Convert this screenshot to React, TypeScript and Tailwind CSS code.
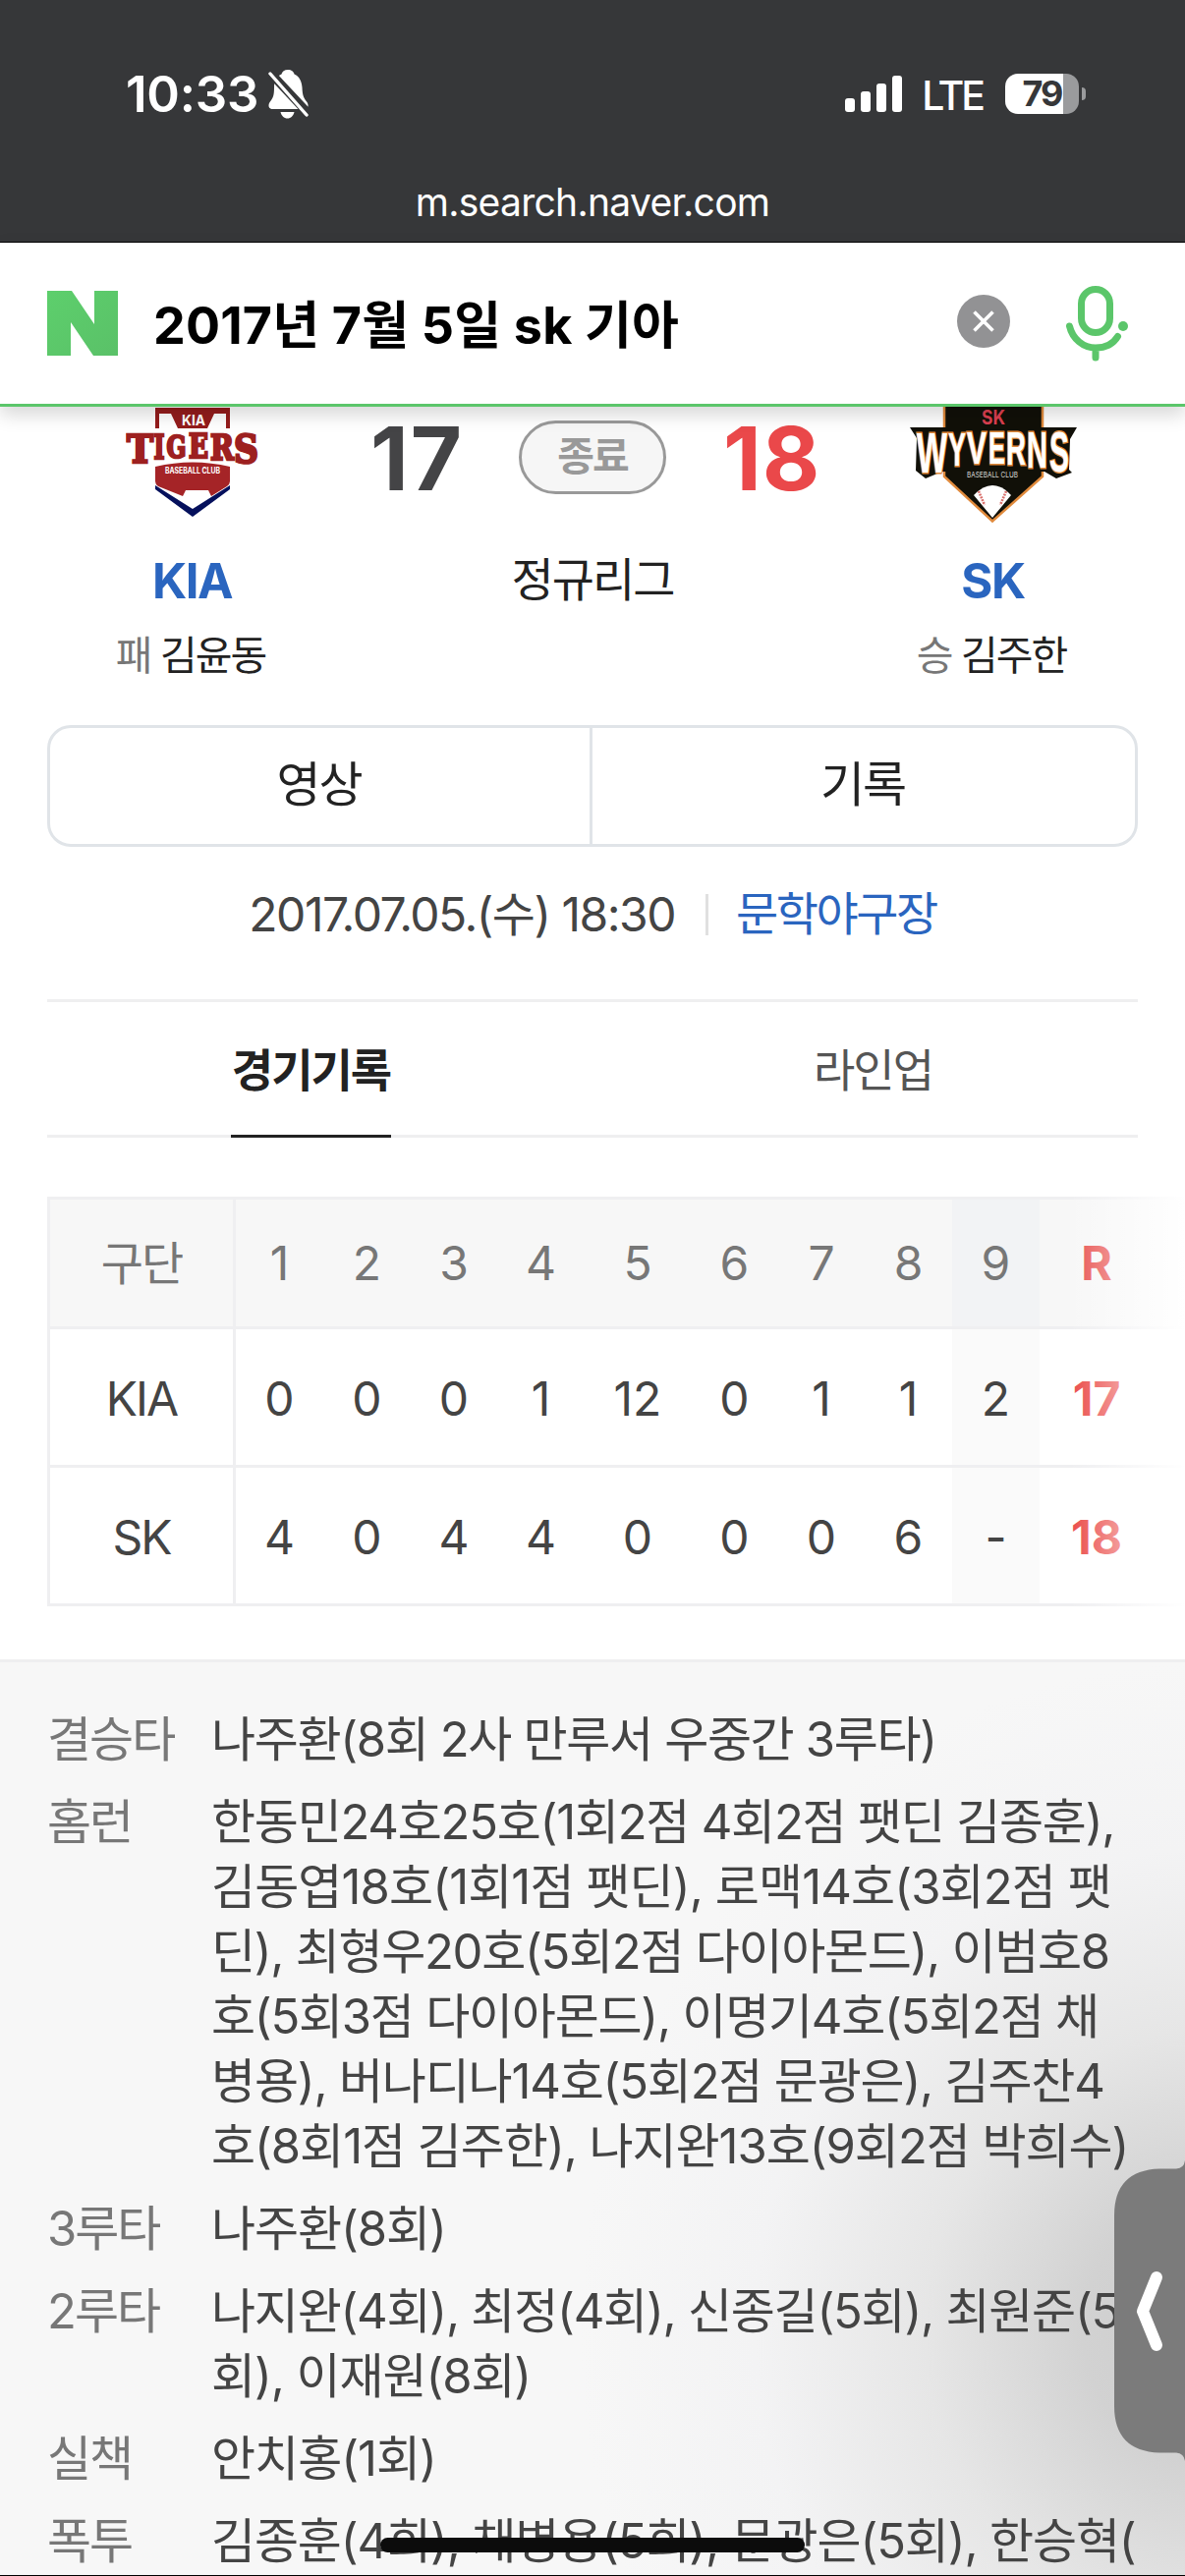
const innings = ["1", "2", "3", "4", "5", "6", "7", "8", "9"];
const teams = [
  { name: "KIA", runs: ["0", "0", "0", "1", "12", "0", "1", "1", "2"], total: "17" },
  { name: "SK", runs: ["4", "0", "4", "4", "0", "0", "0", "6", "-"], total: "18" },
];

type Line = { text: string; tracking: string };

const details: { label: string; lines: Line[] }[] = [
  { label: "결승타", lines: [{ text: "나주환(8회 2사 만루서 우중간 3루타)", tracking: "tracking-[-1.35px]" }] },
  {
    label: "홈런",
    lines: [
      { text: "한동민24호25호(1회2점 4회2점 팻딘 김종훈),", tracking: "tracking-[-1.25px]" },
      { text: "김동엽18호(1회1점 팻딘), 로맥14호(3회2점 팻", tracking: "tracking-[-0.9px]" },
      { text: "딘), 최형우20호(5회2점 다이아몬드), 이범호8", tracking: "tracking-[-1.3px]" },
      { text: "호(5회3점 다이아몬드), 이명기4호(5회2점 채", tracking: "tracking-[-1.25px]" },
      { text: "병용), 버나디나14호(5회2점 문광은), 김주찬4", tracking: "tracking-[-1.2px]" },
      { text: "호(8회1점 김주한), 나지완13호(9회2점 박희수)", tracking: "tracking-[-1.05px]" },
    ],
  },
  { label: "3루타", lines: [{ text: "나주환(8회)", tracking: "tracking-[-1.1px]" }] },
  {
    label: "2루타",
    lines: [
      { text: "나지완(4회), 최정(4회), 신종길(5회), 최원준(5", tracking: "tracking-[-1.25px]" },
      { text: "회), 이재원(8회)", tracking: "tracking-[-1.1px]" },
    ],
  },
  { label: "실책", lines: [{ text: "안치홍(1회)", tracking: "tracking-[-1px]" }] },
  { label: "폭투", lines: [{ text: "김종훈(4회), 채병용(5회), 문광은(5회), 한승혁(", tracking: "tracking-[-1.15px]" }] },
];

function StatusBar() {
  return (
    <header className="h-[247px] shrink-0 border-b border-black bg-[#363739] text-white">
      <div className="flex h-[191px] items-center pl-[128px] pr-[101px]">
        <span className="text-[51px] font-semibold leading-[60px] tracking-[-0.2px]">10:33</span>
        <svg className="ml-[10px] h-[50px] w-[42px]" viewBox="0 0 42 50">
          <path d="M20 0c3.500 0 6 2 6.500 4.500C32 7 34 12 34.500 18c.3 8 1.500 11 5 15 2 3 1 7-2 7h-34c-3 0-4-4-2-7C5 29 6 26 6 18c0-6 2-11 7.500-13.500C14 2 16.500 0 20 0z" fill="white" />
          <path d="M12.500 43h14c-1 4-3.500 6.500-7 6.500s-6-2.500-7-6.500z" fill="white" />
          <path d="M0 1l44 47" stroke="#363739" strokeWidth="9" />
          <path d="M2 4l37 42" stroke="white" strokeWidth="3.400" strokeLinecap="round" />
        </svg>
        <div className="ml-auto flex h-[37px] items-end gap-[6px]">
          <i className="h-[14px] w-[10px] rounded-[3px] bg-white" />
          <i className="h-[21px] w-[10px] rounded-[3px] bg-white" />
          <i className="h-[29px] w-[10px] rounded-[3px] bg-white" />
          <i className="h-[37px] w-[10px] rounded-[3px] bg-white" />
        </div>
        <span className="ml-[20px] mt-[2px] text-[41px] font-medium leading-[50px] tracking-[-3px]">LTE</span>
        <div className="ml-[23px] flex h-[41px] w-[75px] items-center justify-center overflow-hidden rounded-[13px] bg-[linear-gradient(to_right,white_79%,#9a9b9d_79%)]">
          <span className="text-[36px] font-bold leading-[41px] tracking-[-2px] text-[#363739]">79</span>
        </div>
        <i className="ml-[3px] h-[13px] w-[4px] rounded-r-full bg-[#9a9b9d]" />
      </div>
      <p className="text-center text-[39px] leading-[29px] tracking-[-0.7px]">m.search.naver.com</p>
    </header>
  );
}

function SearchBar() {
  return (
    <div className="z-10 flex h-[167px] shrink-0 items-center border-b-[3px] border-[#5bc66a] bg-white pl-12 pr-[58px] shadow-[0_8px_18px_rgba(0,0,0,0.16)]">
      <svg className="h-[66px] w-[72px]" viewBox="0 0 72 66">
        <defs>
          <linearGradient id="brand" x1="0" y1="0" x2="1" y2="1">
            <stop offset="0" stopColor="#5dcf6c" />
            <stop offset="1" stopColor="#5ac168" />
          </linearGradient>
        </defs>
        <path d="M0 0h25l23 34V0h24v66H47L24 32v34H0z" fill="url(#brand)" />
      </svg>
      <p className="ml-[36px] mt-[6px] text-[52px] font-bold leading-[60px] tracking-[0.2px] text-black">2017년 7월 5일 sk 기아</p>
      <svg className="mb-1 ml-auto size-[54px]" viewBox="0 0 54 54">
        <circle cx="27" cy="27" r="27" fill="#929294" />
        <path d="M17.500 17.500l19 19m0-19l-19 19" stroke="white" strokeWidth="3.600" />
      </svg>
      <svg className="ml-[57px] h-[77px] w-[63px]" viewBox="0 0 63 77" fill="none" stroke="#5bc66a" strokeWidth="7" strokeLinecap="round">
        <rect x="15.500" y="3.500" width="29" height="44" rx="14.500" />
        <path d="M3.500 41c3 13 14 22 26.500 22 10 0 18-4 22.500-11.500M30 63v10" />
        <circle cx="58" cy="41" r="5" fill="#5bc66a" stroke="none" />
      </svg>
    </div>
  );
}

function TigersLogo() {
  return (
    <svg className="h-[118px] w-[136px]" viewBox="0 0 136 118">
      <path d="M30 1h76v21h-4V7H90l-7 15H53L46 7H34v15h-4z" fill="#941c1c" />
      <text x="57" y="18.500" textLength="24" lengthAdjust="spacingAndGlyphs" fontSize="14" className="fill-white font-bold">KIA</text>
      <g fontFamily="DejaVu Serif" fontWeight="900" fill="#9d2020" stroke="#9d2020" strokeWidth="2.600">
        <text x="1" y="57" fontSize="40" textLength="27" lengthAdjust="spacingAndGlyphs">T</text>
        <text x="28.500" y="53" fontSize="34" textLength="11" lengthAdjust="spacingAndGlyphs">I</text>
        <text x="41.500" y="52" fontSize="32" textLength="20" lengthAdjust="spacingAndGlyphs">G</text>
        <text x="64" y="52" fontSize="33" textLength="20" lengthAdjust="spacingAndGlyphs">E</text>
        <text x="86" y="54" fontSize="36" textLength="24" lengthAdjust="spacingAndGlyphs">R</text>
        <text x="110" y="57" fontSize="40" textLength="25" lengthAdjust="spacingAndGlyphs">S</text>
      </g>
      <path d="M30 61Q68 52 106 61v15q0 3-3 5L87 91l-3-6H61l-3 6L33 81q-3-2-3-5z" fill="#a52427" />
      <text x="40" y="68" textLength="56" lengthAdjust="spacingAndGlyphs" fontSize="8.500" className="fill-white font-bold">BASEBALL CLUB</text>
      <path d="M30 80l38 24 38-24v4L68 112 30 84z" fill="#05105c" />
    </svg>
  );
}

const wyvernsLetters = [
  { ch: "W", x: 7, y: 67, size: 58, w: 31 },
  { ch: "Y", x: 39, y: 60, size: 49, w: 18 },
  { ch: "V", x: 58, y: 58, size: 46, w: 20 },
  { ch: "E", x: 80, y: 58, size: 46, w: 17 },
  { ch: "R", x: 98, y: 59, size: 48, w: 20 },
  { ch: "N", x: 119, y: 62, size: 52, w: 21 },
  { ch: "S", x: 142, y: 66, size: 57, w: 20 },
];

function WyvernsLogo() {
  return (
    <svg className="h-[118px] w-[170px]" viewBox="0 0 170 118">
      <path d="M35 -4h100v75L84 116.500 35 71z" fill="#111008" stroke="#e08a3c" strokeWidth="2.500" />
      <text x="73" y="18" textLength="24" lengthAdjust="spacingAndGlyphs" fontSize="20" className="fill-[#dc3f50] font-bold">SK</text>
      <path d="M0 21h170l-7 12-1 31 3 3-16 6-12-7H34l-6 2-12 5-10-8 1-33z" fill="#111008" />
      {wyvernsLetters.map((l) => (
        <text key={l.ch} x={l.x} y={l.y} fontSize={l.size} textLength={l.w} lengthAdjust="spacingAndGlyphs" fontFamily="Liberation Sans" fontWeight="700" fill="white" stroke="#e08a3c" strokeWidth="2.800" paintOrder="stroke">
          {l.ch}
        </text>
      ))}
      <text x="58" y="72" textLength="52" lengthAdjust="spacingAndGlyphs" fontSize="8" className="fill-[#d8d8d4]">BASEBALL CLUB</text>
      <path d="M65 90q19-20 38 0l-19 23z" fill="white" />
      <path d="M70 86l6 14M98 86l-6 14" stroke="#d9706c" strokeWidth="2.600" strokeDasharray="2 1" />
    </svg>
  );
}

function Pitcher({ result, name }: { result: string; name: string }) {
  return (
    <p className="mr-[3px] mt-[20px] text-[41px] leading-[50px] tracking-[-2px] text-[#222]">
      <span className="text-[#777]">{result}</span> {name}
    </p>
  );
}

function ScoreBoard() {
  return (
    <section className="grid h-[324px] shrink-0 grid-cols-[376px_1fr_376px] text-center">
      <div className="flex flex-col items-center pl-[15px]">
        <TigersLogo />
        <p className="mt-[30px] text-[49px] font-bold leading-[60px] tracking-[-1.500px] text-[#2a65bf]">KIA</p>
        <Pitcher result="패" name="김윤동" />
      </div>
      <div>
        <div className="grid h-[102px] grid-cols-[97px_1fr_97px] items-center">
          <span className="whitespace-nowrap pt-[3px] text-[90px] font-bold leading-[99px] tracking-[2px] text-[#444446]">17</span>
          <span className="h-[75px] w-[150px] justify-self-center rounded-full border-[3px] border-[#999] bg-[#f6f6f6] text-[41px] font-bold leading-[67px] tracking-[-2px] text-[#999]">종료</span>
          <span className="whitespace-nowrap pl-[3px] pt-[3px] text-[90px] font-bold leading-[99px] tracking-[1px] text-[#ea484a]">18</span>
        </div>
        <p className="mt-[44px] text-[47px] leading-[60px] tracking-[-2px] text-[#222]">정규리그</p>
      </div>
      <div className="flex flex-col items-center pr-[15px]">
        <WyvernsLogo />
        <p className="mt-[30px] text-[49px] font-bold leading-[60px] tracking-[-1.500px] text-[#2a65bf]">SK</p>
        <Pitcher result="승" name="김주한" />
      </div>
    </section>
  );
}

function MatchInfo() {
  return (
    <section className="shrink-0 px-12">
      <div className="grid h-[124px] grid-cols-2 rounded-[24px] border-[3px] border-[#e0e4e8] text-center text-[49px] leading-[116px] tracking-[-2px] text-[#222]">
        <span className="border-r-[3px] border-[#e0e4e8] pr-[2px]">영상</span>
        <span className="pr-[2px]">기록</span>
      </div>
      <div className="flex h-[155px] items-center justify-center pb-[18px] text-[48px] leading-[60px] text-[#444]">
        <span className="tracking-[-1.500px]">2017.07.05.(수) 18:30</span>
        <i className="ml-[31px] mr-[28px] h-[42px] w-[3px] bg-[#e0e0e0]" />
        <span className="mb-[2px] text-[47px] tracking-[-2.500px] text-[#2a65bf]">문학야구장</span>
      </div>
      <nav className="grid h-[141px] grid-cols-2 justify-items-center gap-x-[36px] border-y-[3px] border-[#efeff0] text-[46px] leading-[139px] tracking-[-2px]">
        <span className="h-[138px] w-[163px] border-b-[3px] border-[#222] text-center font-bold text-[#222]">경기기록</span>
        <span className="pr-[2px] text-[#555]">라인업</span>
      </nav>
    </section>
  );
}

function InningTable() {
  return (
    <section className="relative mt-[60px] h-[417px] shrink-0 pl-12">
      <table className="w-[1158px] table-fixed border-separate border-spacing-0 text-center text-[48px] leading-[60px] text-[#444]">
        <colgroup>
          <col className="w-[192px]" />
          <col className="w-[89px]" /><col className="w-[89px]" /><col className="w-[88px]" /><col className="w-[89px]" />
          <col className="w-[108px]" />
          <col className="w-[89px]" /><col className="w-[88px]" /><col className="w-[89px]" /><col className="w-[89px]" />
          <col className="w-[116px]" /><col className="w-[32px]" />
        </colgroup>
        <thead>
          <tr className="h-[135px] bg-[#f7f7f7] text-[#777]">
            <th className="border-x-[3px] border-y-[3px] border-[#efeff1] p-0 text-[47px] font-normal tracking-[-2px]">구단</th>
            {innings.map((n) => (
              <th key={n} className={n === "9" ? "border-y-[3px] border-[#efeff1] bg-[#f2f3f5] p-0 font-normal" : "border-y-[3px] border-[#efeff1] p-0 font-normal"}>{n}</th>
            ))}
            <th className="border-y-[3px] border-[#efeff1] p-0 font-bold text-[#e8504e]">R</th>
            <th className="border-y-[3px] border-[#efeff1] p-0" />
          </tr>
        </thead>
        <tbody>
          {teams.map((t) => (
            <tr key={t.name} className="h-[141px]">
              <td className="border-x-[3px] border-b-[3px] border-[#efeff1] p-0 pt-[4px] tracking-[-2px]">{t.name}</td>
              {t.runs.map((r, i) => (
                <td key={i} className={i === 8 ? "border-b-[3px] border-[#efeff1] bg-[#fafafa] p-0 pt-[4px]" : "border-b-[3px] border-[#efeff1] p-0 pt-[4px]"}>{r}</td>
              ))}
              <td className="border-b-[3px] border-[#efeff1] p-0 pt-[4px] font-bold text-[#ea4a48]">{t.total}</td>
              <td className="border-b-[3px] border-[#efeff1] p-0" />
            </tr>
          ))}
        </tbody>
      </table>
      <div className="absolute inset-y-0 right-0 w-[118px] bg-linear-to-r from-white/0 to-white" />
    </section>
  );
}

function GameDetails() {
  return (
    <section className="relative mt-[54px] grow border-t-[3px] border-[#efeff0] bg-[#f7f7f7] pl-12 pt-[46px]">
      <div className="absolute inset-0 bg-[radial-gradient(ellipse_640px_680px_at_1230px_680px,#cccccc_0%,#d2d2d2_20%,#e6e6e6_45%,#f3f3f4_72%,#f7f7f700_100%)]" />
      <dl className="relative flex flex-col gap-[18px] text-[49px] leading-[66px]">
        {details.map((d) => (
          <div key={d.label} className="flex">
            <dt className="w-[167px] shrink-0 tracking-[-2px] text-[#777]">{d.label}</dt>
            <dd className="whitespace-nowrap text-[#444]">
              {d.lines.map((line) => (
                <p key={line.text} className={line.tracking}>{line.text}</p>
              ))}
            </dd>
          </div>
        ))}
      </dl>
    </section>
  );
}

export default function App() {
  return (
    <main className="relative flex h-[2622px] w-[1206px] flex-col overflow-hidden border-b border-black bg-white font-['Inter','Noto_Sans_CJK_KR',sans-serif]">
      <StatusBar />
      <SearchBar />
      <ScoreBoard />
      <MatchInfo />
      <InningTable />
      <GameDetails />
      <svg className="absolute right-0 top-[2199px] h-[306px] w-[72px]" viewBox="0 0 72 306">
        <path d="M72 0q-1 8-9 8.500H46Q0 10 0 56v194q0 46 46 47.500h17q8 .5 9 8.500z" fill="#7b7b7b" />
        <path d="M43 119L29 153.500 43 188" fill="none" stroke="white" strokeWidth="12" strokeLinecap="round" strokeLinejoin="round" />
      </svg>
      <div className="absolute left-[387px] top-[2583px] h-[15px] w-[432px] rounded-full bg-[#0c0c0c]" />
    </main>
  );
}
